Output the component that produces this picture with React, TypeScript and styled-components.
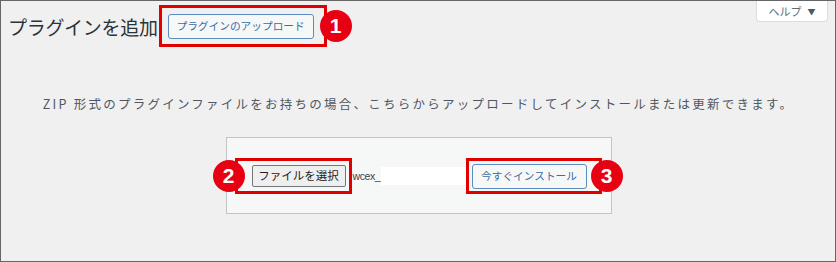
import React from "react"
import styled, { createGlobalStyle } from "styled-components"

const GlobalStyle = createGlobalStyle`
  html, body {
    margin: 0;
    padding: 0;
    background: #f0f0f1;
  }
  * {
    box-sizing: border-box;
  }
`

const FONT = `"Noto Sans CJK JP", "Noto Sans", sans-serif`

const Frame = styled.div`
  width: 836px;
  height: 262px;
  border: 1px solid #666666;
  background: #f0f0f1;
  font-family: ${FONT};
  display: flex;
  flex-direction: column;
`

const TopRow = styled.div`
  display: flex;
  justify-content: space-between;
  align-items: flex-start;
  padding: 0 7px 0 7px;
`

const TitleGroup = styled.div`
  display: flex;
  align-items: center;
  gap: 1px;
  padding-top: 4px;
`

const Title = styled.h1`
  margin: 0;
  font-size: 19px;
  font-weight: 400;
  color: #2c3338;
  line-height: 1;
  letter-spacing: -0.3px;
`

const Marked = styled.div<{ $pad: string }>`
  position: relative;
  display: flex;
  align-items: center;
  flex-shrink: 0;
  border: 3px solid #e00000;
  padding: ${p => p.$pad};
`

const Badge = styled.span<{ $side: "left" | "right"; $offset: number }>`
  position: absolute;
  top: 50%;
  ${p => p.$side}: ${p => p.$offset}px;
  width: 32px;
  height: 32px;
  margin-top: -16px;
  border-radius: 50%;
  background: #e60012;
  color: #fff;
  font-family: "Liberation Sans", Arial, sans-serif;
  font-weight: 700;
  font-size: 21px;
  display: flex;
  align-items: center;
  justify-content: center;
  z-index: 2;
`

const WpButton = styled.button<{ $w: number }>`
  font-family: ${FONT};
  font-size: 10.7px;
  line-height: 1;
  width: ${p => p.$w}px;
  height: 25px;
  padding: 0;
  color: #3a6ea5;
  background: #f6f7f7;
  border: 1px solid #5b8cc2;
  border-radius: 3px;
  white-space: nowrap;
`

const HelpTab = styled.div`
  width: 72px;
  height: 21px;
  background: #fff;
  border: 1px solid #dcdcde;
  border-top: none;
  border-radius: 0 0 4px 4px;
  display: flex;
  align-items: center;
  justify-content: center;
  gap: 6px;
  font-size: 11px;
  color: #646970;
`

const Caret = styled.span`
  font-size: 8px;
  color: #50575e;
`

const Description = styled.p`
  margin: 48px 0 0;
  text-align: center;
  font-size: 12.5px;
  letter-spacing: 2.25px;
  line-height: 18px;
  color: #50575e;
  padding-left: 1px;
`

const UploadBox = styled.div`
  align-self: center;
  margin: 24px 0 0 1px;
  width: 386px;
  height: 77px;
  background: #f6f7f7;
  border: 1px solid #c3c4c7;
  display: flex;
  align-items: center;
  padding: 0 9px 0 8px;
`

const FileButton = styled.button`
  font-family: ${FONT};
  font-size: 11.5px;
  width: 94px;
  height: 22px;
  padding: 0;
  line-height: 1;
  color: #1e1e1e;
  background: #efefef;
  border: 1px solid #767676;
  border-radius: 2px;
  white-space: nowrap;
`

const FileName = styled.span`
  font-family: "Liberation Sans", Arial, sans-serif;
  font-size: 10.5px;
  letter-spacing: -0.4px;
  color: #3c434a;
  padding: 0 1px 0 1px;
  flex-shrink: 0;
`

const FileField = styled.span`
  flex: 1;
  height: 18px;
  background: #fff;
`

export default function App() {
  return (
    <>
      <GlobalStyle />
      <Frame>
        <TopRow>
          <TitleGroup>
            <Title>プラグインを追加</Title>
            <Marked $pad="6px 10px 5px 6px">
              <WpButton $w={146}>プラグインのアップロード</WpButton>
              <Badge $side="right" $offset={-28}>1</Badge>
            </Marked>
          </TitleGroup>
          <HelpTab>
            ヘルプ <Caret>▼</Caret>
          </HelpTab>
        </TopRow>
        <Description>
          ZIP 形式のプラグインファイルをお持ちの場合、こちらからアップロードしてインストールまたは更新できます。
        </Description>
        <UploadBox>
          <Marked $pad="4px 3px 4px 14px">
            <FileButton>ファイルを選択</FileButton>
            <Badge $side="left" $offset={-25}>2</Badge>
          </Marked>
          <FileName>wcex_</FileName>
          <FileField />
          <Marked $pad="3px 12px 2px 3px">
            <WpButton $w={115}>今すぐインストール</WpButton>
            <Badge $side="right" $offset={-24}>3</Badge>
          </Marked>
        </UploadBox>
      </Frame>
    </>
  )
}
